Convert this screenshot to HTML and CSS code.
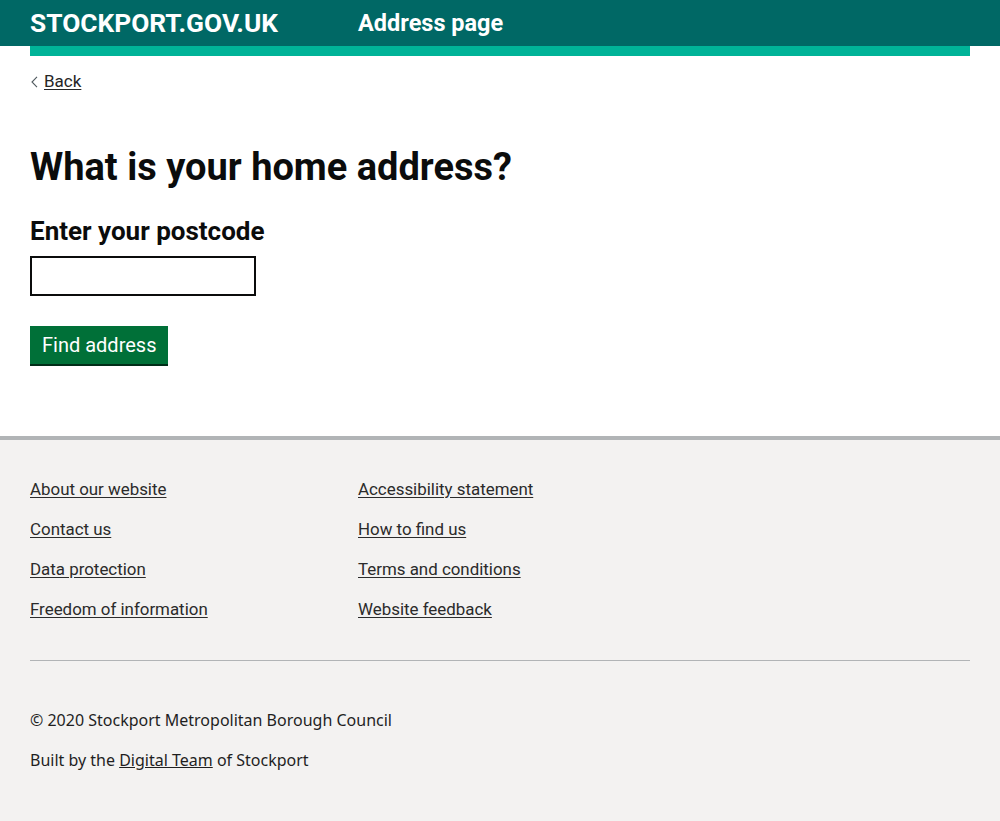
FILE: index.html
```html
<!DOCTYPE html>
<html lang="en">
<head>
<meta charset="utf-8">
<title>Address page</title>
<link rel="stylesheet" href="styles.css">
</head>
<body>
<header class="site-header">
  <div class="header-inner">
    <span class="logo">STOCKPORT.GOV.UK</span>
    <span class="service-name">Address page</span>
  </div>
</header>
<div class="accent-wrap"><div class="accent-bar"></div></div>
<main class="main">
  <a class="back-link" href="#"><svg class="chev" width="7" height="12" viewBox="0 0 7 12"><path d="M6 0.8 L1 6 L6 11.2" fill="none" stroke="#505a5f" stroke-width="1.1"/></svg><span>Back</span></a>
  <h1 class="heading">What is your home address?</h1>
  <label class="label" for="pc">Enter your postcode</label>
  <input class="input" id="pc" type="text">
  <div><button class="button" type="button">Find address</button></div>
</main>
<footer class="footer">
  <div class="footer-inner">
    <div class="footer-links">
      <ul class="col">
        <li><a href="#">About our website</a></li>
        <li><a href="#">Contact us</a></li>
        <li><a href="#">Data protection</a></li>
        <li><a href="#">Freedom of information</a></li>
      </ul>
      <ul class="col">
        <li><a href="#">Accessibility statement</a></li>
        <li><a href="#">How to find us</a></li>
        <li><a href="#">Terms and conditions</a></li>
        <li><a href="#">Website feedback</a></li>
      </ul>
    </div>
    <hr class="rule">
    <p class="meta">© 2020 Stockport Metropolitan Borough Council</p>
    <p class="meta">Built by the <a href="#">Digital Team</a> of Stockport</p>
  </div>
</footer>
</body>
</html>
```
FILE: styles.css
```css
html, body { margin: 0; padding: 0; }
body { font-family: Roboto, "Liberation Sans", sans-serif; color: #0b0c0c; background: #fff; }
.site-header { background: #006865; height: 46px; }
.header-inner { padding: 0 30px; display: flex; align-items: center; height: 46px; }
.logo { color: #fff; font-weight: 700; font-size: 26.3px; width: 328px; }
.service-name { color: #fff; font-weight: 700; font-size: 23.5px; }
.accent-wrap { padding: 0 30px; }
.accent-bar { height: 10px; background: #00b398; }
.main { padding: 14px 30px 72px; }
.back-link { display: inline-flex; align-items: center; gap: 6px; color: #0b0c0c; font-size: 17px; text-decoration: none; height: 22px; }
.back-link span { text-decoration: underline; text-underline-offset: 2px; color: #262626; }
.chev { margin-top: 1px; margin-left: 1px; }
.heading { font-size: 38px; font-weight: 700; margin: 51px 0 0; line-height: 48px; }
.label { display: block; font-size: 26px; font-weight: 700; margin-top: 24px; line-height: 32px; }
.input { display: block; box-sizing: border-box; width: 226px; height: 40px; border: 2px solid #0b0c0c; margin: 9px 0 0; padding: 5px; font-size: 19px; }
.button { margin-top: 30px; background: #007038; color: #fff; border: 0; box-shadow: 0 2px 0 #002d18; font-family: Roboto, sans-serif; font-size: 20px; padding: 0 12px; height: 38px; line-height: 38px; }
.footer { background: #f3f2f1; border-top: 4px solid #b1b4b6; }
.footer-inner { padding: 38px 30px 52px; }
.footer-links { display: grid; grid-template-columns: 328px 1fr; }
.col { list-style: none; margin: 0; padding: 0; }
.col li { height: 40px; line-height: 22px; }
.col a { color: #2b2b2b; font-size: 16.9px; text-underline-offset: 2px; }
.rule { border: 0; border-top: 1px solid #b1b4b6; margin: 22px 0 0; }
.meta { font-family: "Noto Sans", sans-serif; font-size: 16px; margin: 0; line-height: 40px; color: #1f1f1f; }
.meta:first-of-type { margin-top: 39px; }
.meta a { color: #1f1f1f; }
```
